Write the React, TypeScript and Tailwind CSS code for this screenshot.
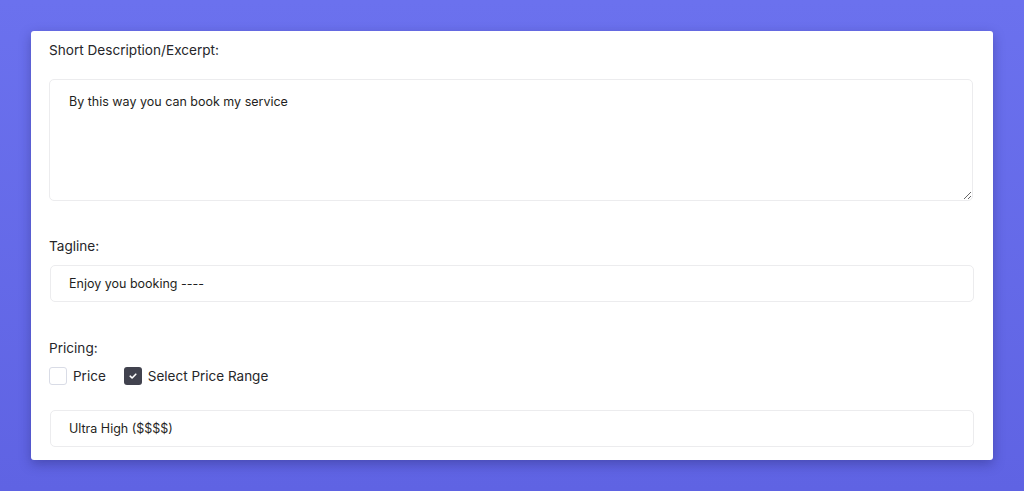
import React from 'react'

function Label({children}: {children: React.ReactNode}) {
  return <div className="text-[13.6px] leading-5 text-[#26262a]">{children}</div>
}

function Checkbox({checked, label}: {checked: boolean; label: string}) {
  return (
    <label className="flex items-center gap-[6px]">
      {checked ? (
        <span className="w-[18px] h-[18px] rounded-[3px] bg-[#41424e] flex items-center justify-center">
          <svg width="10" height="10" viewBox="0 0 10 10" fill="none">
            <path d="M2.2 5.2 L4.1 7 L7.8 3.2" stroke="white" strokeWidth="1.6" strokeLinecap="round" strokeLinejoin="round" />
          </svg>
        </span>
      ) : (
        <span className="w-[18px] h-[18px] rounded-[3px] border border-[#d9dce6] bg-white" />
      )}
      <span className="text-[13.5px] text-[#26262a]">{label}</span>
    </label>
  )
}

export default function App() {
  return (
    <div
      className="w-[1024px] h-[491px] bg-gradient-to-b from-[#6b71ee] to-[#5f63e3] pt-[31px] pl-[31px] overflow-hidden"
      style={{fontFamily: 'Inter, "Noto Sans", sans-serif'}}
    >
      <div className="w-[962px] h-[429px] bg-white rounded-[3px] shadow-[0_4px_12px_rgba(30,30,90,0.35)] pl-[18px] pr-5 pt-[8px]">
        <div className="pt-[1px]">
          <Label>Short Description/Excerpt:</Label>
        </div>
        <textarea
          defaultValue="By this way you can book my service"
          className="mt-[19px] block w-[924px] h-[122px] border border-[#ececee] rounded-[5px] pl-[19px] pr-5 pt-[12px] text-[12.5px] leading-5 text-[#1f1f22] outline-none resize-y"
        />
        <div className="mt-[35px]">
          <Label>Tagline:</Label>
        </div>
        <input
          defaultValue="Enjoy you booking ----"
          className="mt-[9px] ml-px block w-[924px] h-[37px] border border-[#ececee] rounded-[5px] px-[18px] text-[12.5px] text-[#1f1f22] outline-none bg-white"
        />
        <div className="mt-[36px]">
          <Label>Pricing:</Label>
        </div>
        <div className="mt-[8px] flex items-center gap-[18px]">
          <Checkbox checked={false} label="Price" />
          <Checkbox checked={true} label="Select Price Range" />
        </div>
        <input
          defaultValue="Ultra High ($$$$)"
          className="mt-[24px] ml-px block w-[924px] h-[37px] border border-[#ececee] rounded-[5px] px-[18px] text-[12.5px] text-[#1f1f22] outline-none bg-white"
        />
      </div>
    </div>
  )
}
